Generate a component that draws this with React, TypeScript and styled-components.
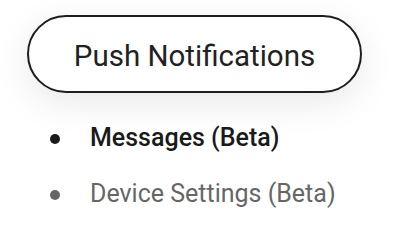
import React from 'react';
import styled, { createGlobalStyle } from 'styled-components';

const GlobalStyle = createGlobalStyle`
  body {
    margin: 0;
    background: #ffffff;
    font-family: Roboto, "Noto Sans", sans-serif;
  }
`;

const Page = styled.div`
  display: flex;
  flex-direction: column;
  align-items: flex-start;
  padding: 15px 0 0 27px;
`;

const PillButton = styled.button`
  display: flex;
  align-items: center;
  justify-content: center;
  box-sizing: border-box;
  width: 335px;
  height: 78px;
  padding: 3px 0 0;
  border: 2px solid #1e1e1e;
  border-radius: 39px;
  background: #ffffff;
  box-shadow: 0 10px 36px rgba(0, 0, 0, 0.09);
  font-family: Roboto, "Noto Sans", sans-serif;
  font-size: 29.5px;
  font-weight: 400;
  color: #222222;
  cursor: pointer;
`;

const MenuList = styled.ul`
  list-style: none;
  margin: 17px 0 0;
  padding: 0 0 0 23px;
`;

const MenuItem = styled.li<{ $active?: boolean }>`
  display: flex;
  align-items: center;
  gap: 30px;
  height: 56px;
  font-size: 25px;
  line-height: 56px;
  font-weight: ${(p) => (p.$active ? 500 : 400)};
  color: ${(p) => (p.$active ? '#1a1a1a' : '#666666')};

  &::before {
    content: '';
    flex: none;
    width: 10px;
    height: 10px;
    margin-top: 2px;
    border-radius: 50%;
    background: ${(p) => (p.$active ? '#1a1a1a' : '#666666')};
  }
`;

const App = () => {
  return (
    <>
      <GlobalStyle />
      <Page>
        <PillButton>Push Notifications</PillButton>
        <MenuList>
          <MenuItem $active>Messages (Beta)</MenuItem>
          <MenuItem>Device Settings (Beta)</MenuItem>
        </MenuList>
      </Page>
    </>
  );
};

export default App;
